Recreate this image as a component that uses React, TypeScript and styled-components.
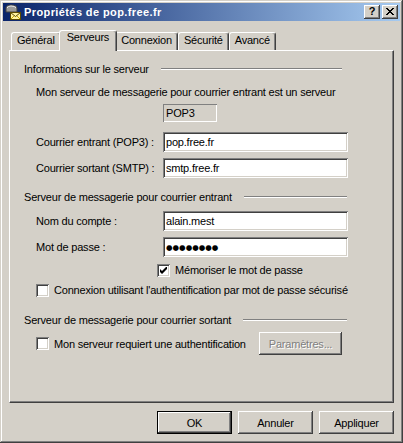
import React from 'react'
import styled, { createGlobalStyle } from 'styled-components'

const GlobalStyle = createGlobalStyle`
  html, body {
    margin: 0;
    padding: 0;
    background: #d4d0c8;
  }
  body {
    font-family: "Liberation Sans", Arial, sans-serif;
    font-size: 11px;
    letter-spacing: -0.2px;
    color: #000;
  }
`

const Window = styled.div`
  width: 403px;
  height: 443px;
  box-sizing: border-box;
  padding: 3px;
  background: #d4d0c8;
  box-shadow: inset -1px -1px #404040, inset 1px 1px #d4d0c8, inset -2px -2px #808080, inset 2px 2px #ffffff;
  display: flex;
  flex-direction: column;
`

const TitleBar = styled.div`
  height: 18px;
  display: flex;
  align-items: center;
  padding: 0 2px;
  background: linear-gradient(to right, #0a246a, #a6caf0);
`

const TitleText = styled.span`
  margin-left: 3px;
  flex: 1;
  color: #fff;
  font-weight: bold;
  font-size: 11px;
  letter-spacing: 0.4px;
  white-space: nowrap;
`

const CaptionButton = styled.div`
  width: 16px;
  height: 14px;
  box-sizing: border-box;
  background: #d4d0c8;
  box-shadow: inset -1px -1px #404040, inset 1px 1px #ffffff, inset -2px -2px #808080, inset 2px 2px #d4d0c8;
  display: flex;
  align-items: center;
  justify-content: center;
  font-weight: bold;
  font-size: 11px;
  line-height: 1;
  margin-left: 2px;
  padding-bottom: 1px;
`

const Body = styled.div`
  flex: 1;
  display: flex;
  flex-direction: column;
  padding: 0 6px;
`

const TabStrip = styled.div`
  margin-top: 9px;
  height: 20px;
  display: flex;
  align-items: flex-end;
  padding-left: 2px;
  position: relative;
  z-index: 1;
`

const Tab = styled.div<{ $active?: boolean }>`
  height: ${p => (p.$active ? 21 : 18)}px;
  margin: ${p => (p.$active ? '0 -2px -1px' : '0')};
  padding: ${p => (p.$active ? '0 7px' : '1px 5px 0')};
  box-sizing: border-box;
  background: #d4d0c8;
  border-top: 1px solid #fff;
  border-left: 1px solid #fff;
  border-right: 1px solid #404040;
  border-radius: 3px 3px 0 0;
  box-shadow: inset -1px 0 #808080;
  line-height: 13px;
  white-space: nowrap;
  position: relative;
  z-index: ${p => (p.$active ? 2 : 0)};
`

const Panel = styled.div`
  height: 353px;
  box-sizing: border-box;
  padding: 11px 0 0 14px;
  background: #d4d0c8;
  border-top: 1px solid #fff;
  border-left: 1px solid #fff;
  border-right: 1px solid #404040;
  border-bottom: 1px solid #404040;
  box-shadow: inset -1px -1px #808080;
  display: flex;
  flex-direction: column;
`

const GroupHeader = styled.div<{ $width: number; $top?: number }>`
  width: ${p => p.$width}px;
  height: 14px;
  margin-top: ${p => p.$top ?? 0}px;
  display: flex;
  align-items: center;
  gap: 12px;
  white-space: nowrap;
`

const Etch = styled.div`
  flex: 1;
  height: 0;
  border-top: 1px solid #808080;
  border-bottom: 1px solid #fff;
`

const Row = styled.div<{ $top: number; $height: number; $indent?: number; $width?: number }>`
  margin-top: ${p => p.$top}px;
  height: ${p => p.$height}px;
  margin-left: ${p => 12 + (p.$indent ?? 0)}px;
  width: ${p => (p.$width ? `${p.$width}px` : 'auto')};
  display: flex;
  align-items: center;
  white-space: nowrap;
`

const Label = styled.span`
  width: 127px;
`

const TextBox = styled.div`
  width: 185px;
  height: 20px;
  box-sizing: border-box;
  padding: 0 3px;
  background: #fff;
  box-shadow: inset 1px 1px #808080, inset -1px -1px #ffffff, inset 2px 2px #404040, inset -2px -2px #d4d0c8;
  display: flex;
  align-items: center;
`

const StaticBox = styled.div`
  width: 54px;
  height: 18px;
  box-sizing: border-box;
  padding: 0 3px;
  box-shadow: inset 1px 1px #808080, inset -1px -1px #ffffff;
  display: flex;
  align-items: center;
`

const Mask = styled.span`
  font-family: "DejaVu Sans", sans-serif;
  font-size: 7.5px;
  letter-spacing: 0;
`

const Box = styled.div`
  width: 13px;
  height: 13px;
  box-sizing: border-box;
  background: #fff;
  box-shadow: inset 1px 1px #808080, inset -1px -1px #ffffff, inset 2px 2px #404040, inset -2px -2px #d4d0c8;
  display: flex;
  align-items: center;
  justify-content: center;
  margin-right: 5px;
  flex-shrink: 0;
`

const Button = styled.div<{ $default?: boolean; $disabled?: boolean; $width?: number }>`
  width: ${p => p.$width ?? 75}px;
  height: 23px;
  box-sizing: border-box;
  background: #d4d0c8;
  border: ${p => (p.$default ? '1px solid #000' : 'none')};
  box-shadow: inset -1px -1px #404040, inset 1px 1px #ffffff, inset -2px -2px #808080, inset 2px 2px #d4d0c8;
  display: flex;
  align-items: center;
  justify-content: center;
  color: ${p => (p.$disabled ? '#808080' : '#000')};
  text-shadow: ${p => (p.$disabled ? '1px 1px #ffffff' : 'none')};
`

const SideButton = styled(Button)`
  margin-left: auto;
`

const ButtonRow = styled.div`
  margin-top: 8px;
  display: flex;
  justify-content: flex-end;
  gap: 6px;
`

const MailIcon = () => (
  <svg width="16" height="16" viewBox="0 0 16 16">
    <path d="M1 8 V4 Q1 1 6 1 Q12 1 12 4 V8 Z" fill="#9a9a9a" stroke="#404040" />
    <path d="M2 4 Q3 2 6 2 Q10 2 11 4" fill="none" stroke="#e8e8e8" />
    <rect x="5.5" y="8.5" width="10" height="7" fill="#fff3a0" stroke="#5a4a00" />
    <path d="M5.5 8.5 L10.5 12.5 L15.5 8.5" fill="none" stroke="#5a4a00" />
    <path d="M6 15 L9 12 M15 15 L12 12" stroke="#c8a800" />
  </svg>
)

const CloseGlyph = () => (
  <svg width="8" height="7" viewBox="0 0 8 7">
    <path d="M0 0h2v1h1v1h2v-1h1v-1h2v1h-1v1h-1v1h-1v1h1v1h1v1h1v1h-2v-1h-1v-1h-2v1h-1v1h-2v-1h1v-1h1v-1h1v-1h-1v-1h-1v-1h-1z" fill="#000" />
  </svg>
)

const Check = () => (
  <svg width="7" height="7" viewBox="0 0 7 7">
    <path d="M0 2v3l2 2l5-5v-3l-5 5z" fill="#000" />
  </svg>
)

const tabs = ['Général', 'Serveurs', 'Connexion', 'Sécurité', 'Avancé']

export default function App() {
  return (
    <>
      <GlobalStyle />
      <Window>
        <TitleBar>
          <MailIcon />
          <TitleText>Propriétés de pop.free.fr</TitleText>
          <CaptionButton>?</CaptionButton>
          <CaptionButton><CloseGlyph /></CaptionButton>
        </TitleBar>
        <Body>
          <TabStrip>
            {tabs.map(t => (
              <Tab key={t} $active={t === 'Serveurs'}>{t}</Tab>
            ))}
          </TabStrip>
          <Panel>
            <GroupHeader $width={318}>
              Informations sur le serveur
              <Etch />
            </GroupHeader>
            <Row $top={9} $height={14}>
              Mon serveur de messagerie pour courrier entrant est un serveur
            </Row>
            <Row $top={5} $height={18} $indent={127}>
              <StaticBox>POP3</StaticBox>
            </Row>
            <Row $top={10} $height={20}>
              <Label>Courrier entrant (POP3) :</Label>
              <TextBox>pop.free.fr</TextBox>
            </Row>
            <Row $top={6} $height={20}>
              <Label>Courrier sortant (SMTP) :</Label>
              <TextBox>smtp.free.fr</TextBox>
            </Row>
            <GroupHeader $width={323} $top={12}>
              Serveur de messagerie pour courrier entrant
              <Etch />
            </GroupHeader>
            <Row $top={7} $height={20}>
              <Label>Nom du compte :</Label>
              <TextBox>alain.mest</TextBox>
            </Row>
            <Row $top={6} $height={20}>
              <Label>Mot de passe :</Label>
              <TextBox><Mask>●●●●●●●●</Mask></TextBox>
            </Row>
            <Row $top={6} $height={14} $indent={121}>
              <Box><Check /></Box>
              Mémoriser le mot de passe
            </Row>
            <Row $top={6} $height={14}>
              <Box />
              Connexion utilisant l'authentification par mot de passe sécurisé
            </Row>
            <GroupHeader $width={323} $top={16}>
              Serveur de messagerie pour courrier sortant
              <Etch />
            </GroupHeader>
            <Row $top={5} $height={23} $width={306}>
              <Box />
              Mon serveur requiert une authentification
              <SideButton $disabled $width={83}>Paramètres...</SideButton>
            </Row>
          </Panel>
          <ButtonRow>
            <Button $default>OK</Button>
            <Button>Annuler</Button>
            <Button>Appliquer</Button>
          </ButtonRow>
        </Body>
      </Window>
    </>
  )
}
